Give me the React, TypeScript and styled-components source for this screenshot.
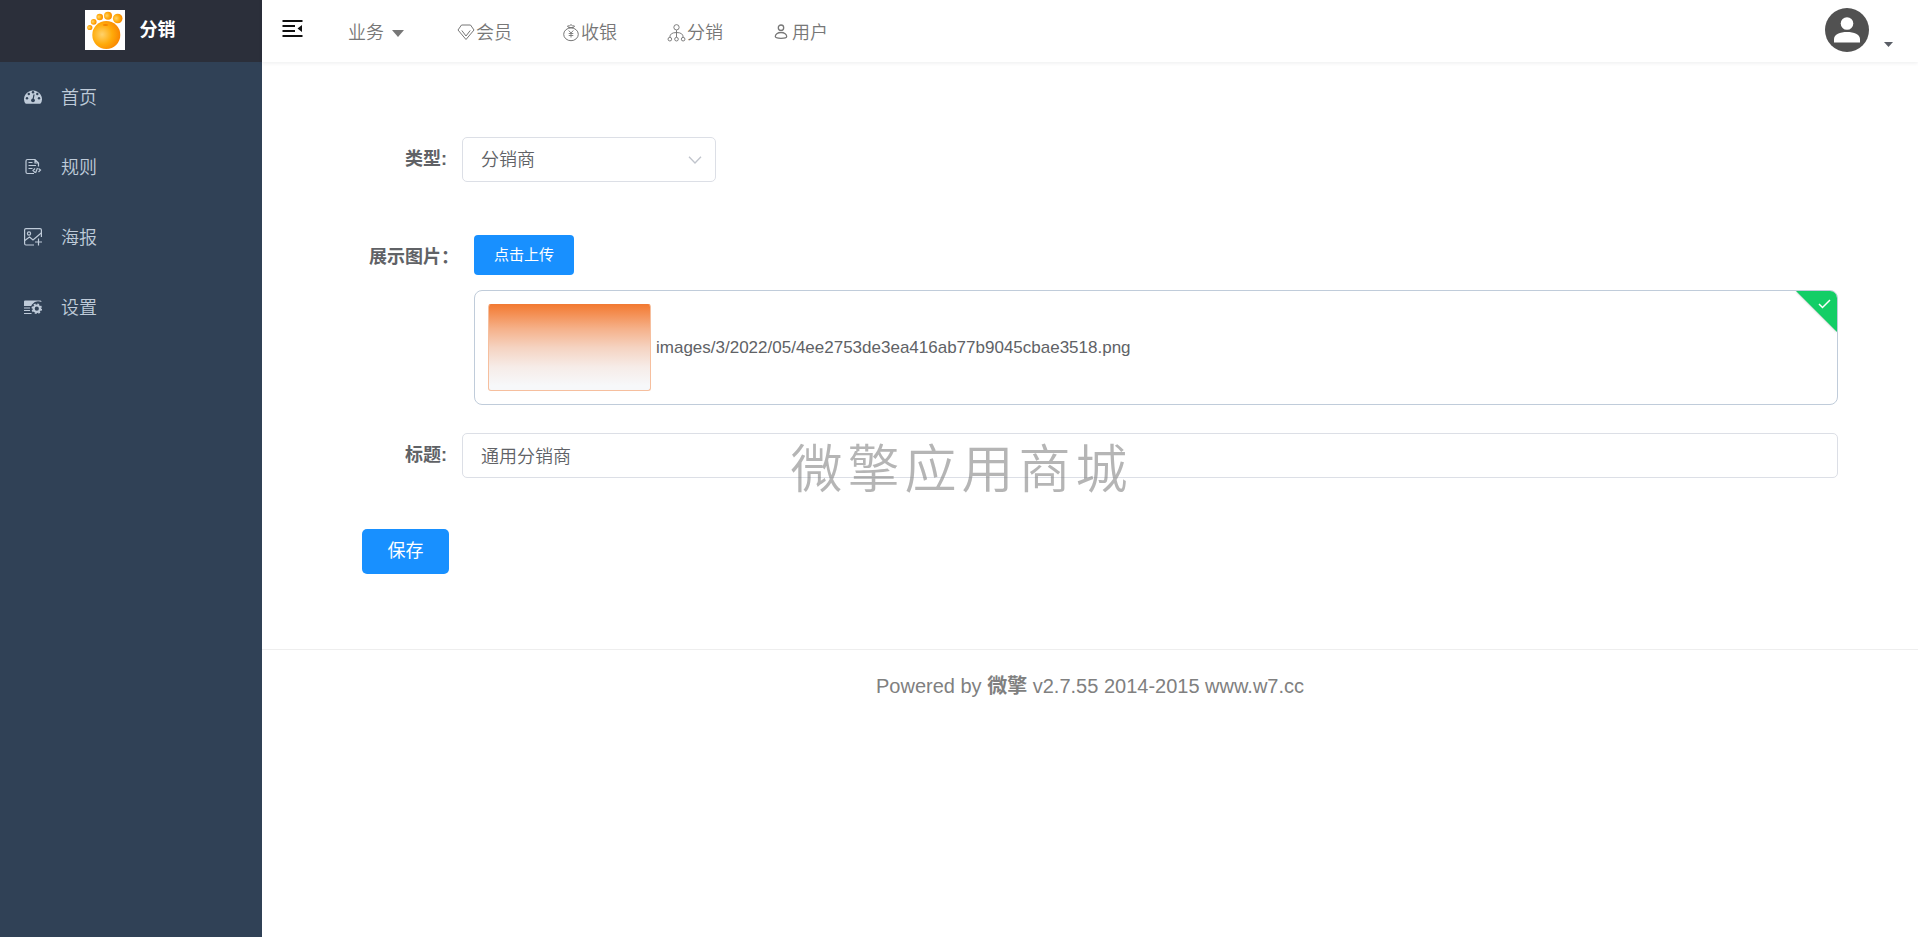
import React from "react";
import styled, { createGlobalStyle } from "styled-components";

const GlobalStyle = createGlobalStyle`
  *, *::before, *::after { box-sizing: border-box; }
  body {
    margin: 0;
    background: #fff;
    color: #606266;
    font-family: "Liberation Sans", Arial, "Noto Sans CJK SC", sans-serif;
    font-size: 18px;
    line-height: 24px;
  }
  button, input, select { font: inherit; }
  a { color: inherit; text-decoration: none; }
  svg { display: block; }
`;

const Page = styled.div`
  display: flex;
  min-height: 100vh;
`;

const Sidebar = styled.aside`
  flex: 0 0 262px;
  background: #304156;
  color: #bfcbd9;
`;

const Brand = styled.a`
  display: flex;
  align-items: center;
  justify-content: center;
  gap: 15px;
  height: 62px;
  background: #2b2f3a;
  color: #fff;
  font-weight: 700;
  padding: 0 2px 2px 0;
`;

const MenuLink = styled.a`
  display: flex;
  align-items: center;
  gap: 19px;
  height: 70px;
  padding: 0 24px;
  font-weight: 350;

  span { padding-top: 2px; }
`;

const Column = styled.div`
  flex: 1;
  min-width: 0;
`;

const TopBar = styled.header`
  display: flex;
  align-items: center;
  height: 62px;
  padding: 0 25px 0 20px;
  box-shadow: 0 1px 4px rgba(0, 21, 41, 0.08);
`;

const IconButton = styled.button`
  display: flex;
  align-items: flex-end;
  gap: 15px;
  padding: 0;
  border: 0;
  background: none;
  color: #111;
  cursor: pointer;
`;

const Toggle = styled(IconButton)`
  margin-bottom: 5px;
`;

const Account = styled(IconButton)`
  margin-left: auto;
  margin-bottom: 2px;
  color: #5a5e66;

  svg + svg { margin-bottom: 5px; }
`;

const Nav = styled.nav`
  display: flex;
  align-items: center;
  gap: 50px;
  margin-left: 45px;
  color: #777;
  font-weight: 350;
`;

const NavLink = styled.a`
  display: flex;
  align-items: center;
  gap: 1px;
  padding-top: 4px;
`;

const NavMenu = styled(NavLink)`
  gap: 8px;
  margin-right: 3px;
`;

const Form = styled.form`
  padding: 75px 80px;
  border-bottom: 1px solid #eee;
`;

const Field = styled.div<{ $label: number; $gap: number }>`
  display: grid;
  grid-template-columns: ${(p) => p.$label}px minmax(0, 1fr);
  margin-bottom: ${(p) => p.$gap}px;
`;

const Label = styled.label`
  padding-right: 15px;
  text-align: right;
  font-weight: 700;
  line-height: 44px;
`;

const SelectBox = styled.div`
  display: grid;
  width: 254px;
  align-items: center;

  > * { grid-area: 1 / 1; }
  > svg { justify-self: end; margin-right: 14px; pointer-events: none; }
`;

const Select = styled.select`
  appearance: none;
  width: 100%;
  height: 45px;
  padding: 0 40px 0 18px;
  border: 1px solid #dcdfe6;
  border-radius: 5px;
  background: #fff;
  color: #606266;
  font-weight: 350;
`;

const TextInput = styled.input`
  width: 100%;
  height: 45px;
  padding: 0 18px 2px;
  border: 1px solid #dcdfe6;
  border-radius: 5px;
  background: #fff;
  color: #606266;
  font-weight: 350;
`;

const Primary = styled.button`
  border: 0;
  background: #1890ff;
  color: #fff;
  cursor: pointer;
`;

const UploadButton = styled(Primary)`
  width: 100px;
  height: 40px;
  border-radius: 4px;
  font-size: 15px;
`;

const SaveButton = styled(Primary)`
  width: 87px;
  height: 45px;
  margin-left: 20px;
  border-radius: 5px;
  padding-bottom: 3px;
`;

const FileCard = styled.div`
  position: relative;
  display: flex;
  align-items: center;
  gap: 5px;
  height: 115px;
  margin-top: 15px;
  padding: 0 13px;
  border: 1px solid #c0ccda;
  border-radius: 8px;
  overflow: hidden;
  font-size: 17px;
`;

const Thumbnail = styled.div`
  width: 163px;
  height: 87px;
  border: 1px solid #f6bf9e;
  border-top-color: #f17a35;
  border-radius: 3px;
  background: linear-gradient(#f37b33, #f5b18a 28%, #f5d3c1 50%, #f6ece8 73%, #f7f8fa 95%);
`;

const DoneBadge = styled.div`
  position: absolute;
  top: 0;
  right: 0;
  width: 42px;
  height: 42px;
  filter: drop-shadow(0 0 1px rgba(0, 0, 0, 0.3));
`;

const Footer = styled.footer`
  padding: 24px 20px;
  color: #808080;
  font-size: 20px;
  text-align: center;
`;

const Watermark = styled.div`
  position: fixed;
  inset: 0;
  display: flex;
  align-items: center;
  justify-content: center;
  padding: 0 0 6px 5px;
  color: rgba(128, 128, 128, 0.58);
  font-family: "Noto Sans CJK SC", sans-serif;
  font-size: 52px;
  font-weight: 350;
  letter-spacing: 5px;
  pointer-events: none;
`;

const line = { fill: "none", stroke: "currentColor" } as const;

const PawLogo = () => (
  <svg width="40" height="40" viewBox="0 0 40 40" aria-hidden="true">
    <defs>
      <radialGradient id="ball" cx="0.35" cy="0.48" r="0.65">
        <stop offset="0" stopColor="#ffd26b" />
        <stop offset="0.55" stopColor="#ffab0a" />
        <stop offset="1" stopColor="#f98500" />
      </radialGradient>
    </defs>
    <rect width="40" height="40" fill="#fff" />
    <g fill="url(#ball)">
      <circle cx="21.300" cy="25" r="14" />
      <circle cx="4.800" cy="17.500" r="2.600" />
      <circle cx="8.700" cy="11.800" r="2.900" />
      <circle cx="14.700" cy="7" r="3.300" />
      <circle cx="23" cy="5.700" r="4" />
      <circle cx="32.700" cy="8.500" r="4.800" />
    </g>
    <ellipse cx="20.500" cy="15" rx="2.600" ry="1" fill="#f38200" />
  </svg>
);

const GaugeIcon = () => (
  <svg width="18" height="18" viewBox="0 0 18 18" aria-hidden="true">
    <path fill="currentColor" d="M1 15A9 8.500 0 1 1 17 15q-.4.700-1.200.7H2.200q-.8 0-1.200-.7Z" />
    <g fill="#304156">
      <circle cx="9" cy="4.300" r="1.200" />
      <circle cx="4.800" cy="6" r="1.200" />
      <circle cx="13.300" cy="6" r="1.200" />
      <circle cx="3" cy="10.200" r="1.200" />
      <circle cx="15" cy="10.200" r="1.200" />
      <circle cx="9" cy="12.300" r="1.900" />
    </g>
    <path d="M9 12 10 6.500" stroke="#304156" strokeWidth="1.200" />
  </svg>
);

const RuleIcon = () => (
  <svg width="18" height="18" viewBox="0 0 18 18" {...line} strokeWidth="1.200" aria-hidden="true">
    <path d="M10 15.500H3.500Q2 15.500 2 14V3Q2 1.500 3.500 1.500H11L14.500 5V8.500M11 1.500V5H14.500M4.500 4.500H8.500M4.500 7.500H12M4.500 10.500H8.500" />
    <path d="M11 10.500 9 12.500 11 14.500M14.500 10.500 16.500 12 14.500 14M13.500 10 11.500 15" />
  </svg>
);

const PosterIcon = () => (
  <svg width="18" height="18" viewBox="0 0 18 18" {...line} strokeWidth="1.200" aria-hidden="true">
    <path d="M10 17H2Q.6 17 .6 15.500V2Q.6.700 2 .7H16Q17.400.700 17.400 2V9" />
    <circle cx="5" cy="5.500" r="1.600" />
    <path d="M.8 12.500 5.500 9 9 12 17.200 5M14.500 10.500V17.500M11 14H18" />
  </svg>
);

const SettingsIcon = () => (
  <svg width="18" height="18" viewBox="0 0 18 18" aria-hidden="true">
    <path fill="currentColor" d="M0 3.500Q0 2.500 1 2.500H16.500Q17.500 2.500 17.500 4 12 1.500 8 6.500L7.200 8H0Z" />
    <path d="M0 10H6M0 12.500H6M0 15.500H7.500" stroke="currentColor" strokeWidth="1.200" />
    <circle cx="12.800" cy="10.700" r="3.200" {...line} strokeWidth="2.200" />
    <circle cx="12.800" cy="10.700" r="4.600" {...line} strokeWidth="1.500" strokeDasharray="1.900 1.700" />
  </svg>
);

const FoldIcon = () => (
  <svg width="21" height="18" viewBox="0 0 21 18" fill="currentColor" aria-hidden="true">
    <path d="M.5 0H20.500V2H.5ZM.5 5H13V7H.5ZM.5 10H13V12H.5ZM.5 15H20.500V17H.5ZM20 5V12L15.500 8.500Z" />
  </svg>
);

const DiamondIcon = () => (
  <svg width="18" height="18" viewBox="0 0 18 18" {...line} aria-hidden="true">
    <path d="M4.500 1H13.500L17 6 9 15.500 1 6ZM4.800 6.500 9 12 13.200 6.500" />
  </svg>
);

const MoneyBagIcon = () => (
  <svg width="18" height="18" viewBox="0 0 18 18" {...line} aria-hidden="true">
    <path d="M6.500 3.500 5.500 2 7.500 1.800 9 .6 10.500 1.800 12.500 2 11.500 3.500Z" />
    <ellipse cx="9" cy="10.300" rx="7.300" ry="6.400" />
    <path d="M6.700 6.500 9 9 11.300 6.500M9 9V13.500M6.700 9.500H11.300M6.700 11.500H11.300" strokeWidth=".9" />
  </svg>
);

const BranchIcon = () => (
  <svg width="19" height="20" viewBox="0 0 20 20" {...line} aria-hidden="true">
    <circle cx="10" cy="4" r="2.800" />
    <circle cx="3" cy="16.500" r="1.900" />
    <circle cx="10" cy="16.500" r="1.900" />
    <circle cx="17" cy="16.500" r="1.900" />
    <path d="M10 7V14.500M3 14.500Q3 9.500 10 9.500T17 14.500" />
  </svg>
);

const UserIcon = () => (
  <svg width="18" height="18" viewBox="0 0 18 18" {...line} strokeWidth="1.300" aria-hidden="true">
    <circle cx="8" cy="3.700" r="2.700" />
    <path d="M8 8.500C4.500 8.500 2.300 10.500 2.300 12.500 2.300 14 4 14.300 8 14.300S13.700 14 13.700 12.500C13.700 10.500 11.500 8.500 8 8.500Z" />
  </svg>
);

const Caret = ({ width, height }: { width: number; height: number }) => (
  <svg width={width} height={height} viewBox="0 0 10 6" preserveAspectRatio="none" fill="currentColor" aria-hidden="true">
    <path d="M0 0H10L5 6Z" />
  </svg>
);

const AvatarIcon = () => (
  <svg width="44" height="44" viewBox="0 0 44 44" aria-hidden="true">
    <circle cx="22" cy="22" r="22" fill="#515151" />
    <circle cx="22" cy="15.500" r="6.300" fill="#fff" />
    <path fill="#fff" d="M9 34.500V31C9 26.500 15 24 22 24S35 26.500 35 31V34.500Z" />
  </svg>
);

const menu = [
  { text: "首页", Icon: GaugeIcon },
  { text: "规则", Icon: RuleIcon },
  { text: "海报", Icon: PosterIcon },
  { text: "设置", Icon: SettingsIcon },
];

const sections = [
  { text: "会员", Icon: DiamondIcon },
  { text: "收银", Icon: MoneyBagIcon },
  { text: "分销", Icon: BranchIcon },
  { text: "用户", Icon: UserIcon },
];

export default function App() {
  return (
    <Page>
      <GlobalStyle />
      <Sidebar>
        <Brand href="#">
          <PawLogo />
          分销
        </Brand>
        <nav>
          {menu.map(({ text, Icon }) => (
            <MenuLink href="#" key={text}>
              <Icon />
              <span>{text}</span>
            </MenuLink>
          ))}
        </nav>
      </Sidebar>
      <Column>
        <TopBar>
          <Toggle type="button" aria-label="菜单">
            <FoldIcon />
          </Toggle>
          <Nav>
            <NavMenu href="#">
              业务
              <Caret width={12} height={7} />
            </NavMenu>
            {sections.map(({ text, Icon }) => (
              <NavLink href="#" key={text}>
                <Icon />
                {text}
              </NavLink>
            ))}
          </Nav>
          <Account type="button" aria-label="账户">
            <AvatarIcon />
            <Caret width={9} height={5} />
          </Account>
        </TopBar>
        <main>
          <Form onSubmit={(e) => e.preventDefault()}>
            <Field $label={120} $gap={53}>
              <Label htmlFor="kind">类型:</Label>
              <SelectBox>
                <Select id="kind">
                  <option>分销商</option>
                </Select>
                <svg width="14" height="8" viewBox="0 0 14 8" fill="none" stroke="#c0c4cc" strokeWidth="1.300" aria-hidden="true">
                  <path d="M1 .7 7 7 13 .7" />
                </svg>
              </SelectBox>
            </Field>
            <Field $label={132} $gap={28}>
              <Label htmlFor="upload">展示图片：</Label>
              <div>
                <UploadButton id="upload" type="button">点击上传</UploadButton>
                <FileCard>
                  <Thumbnail />
                  images/3/2022/05/4ee2753de3ea416ab77b9045cbae3518.png
                  <DoneBadge>
                    <svg width="42" height="42" viewBox="0 0 42 42" aria-hidden="true">
                      <path d="M1 0H42V41Z" fill="#13ce66" />
                      <path d="M24 13 27.500 16.500 35 9" fill="none" stroke="#fff" strokeWidth="1.500" />
                    </svg>
                  </DoneBadge>
                </FileCard>
              </div>
            </Field>
            <Field $label={120} $gap={51}>
              <Label htmlFor="title">标题:</Label>
              <TextInput id="title" defaultValue="通用分销商" />
            </Field>
            <SaveButton type="submit">保存</SaveButton>
          </Form>
        </main>
        <Footer>
          Powered by <b>微擎</b> v2.7.55 2014-2015 www.w7.cc
        </Footer>
      </Column>
      <Watermark>微擎应用商城</Watermark>
    </Page>
  );
}
